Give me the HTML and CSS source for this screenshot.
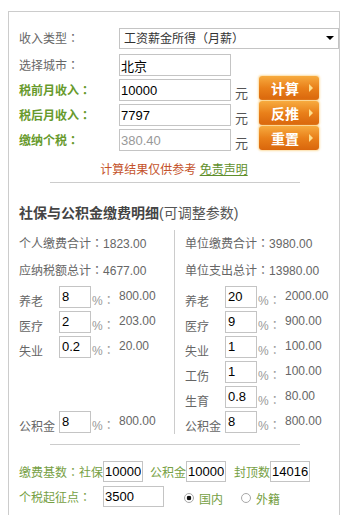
FILE: index.html
```html
<!DOCTYPE html>
<html lang="zh-CN">
<head>
<meta charset="utf-8">
<title>个税计算器</title>
<link rel="stylesheet" href="styles.css">
</head>
<body>
<div class="calc">
  <div class="row row-select">
    <span class="label">收入类型<span class="colon" lang="zh-TW">：</span></span>
    <div class="select-wrap">
      <select class="select"><option>工资薪金所得（月薪）</option></select>
      <span class="caret"></span>
    </div>
  </div>
  <div class="row">
    <span class="label">选择城市<span class="colon" lang="zh-TW">：</span></span>
    <input class="field" value="北京">
  </div>
  <div class="money">
    <div class="money-rows">
      <div class="row"><span class="label label-green">税前月收入<span class="colon" lang="zh-TW">：</span></span><input class="field" value="10000"><span class="unit">元</span></div>
      <div class="row"><span class="label label-green">税后月收入<span class="colon" lang="zh-TW">：</span></span><input class="field" value="7797"><span class="unit">元</span></div>
      <div class="row"><span class="label label-green">缴纳个税<span class="colon" lang="zh-TW">：</span></span><input class="field field-muted" value="380.40"><span class="unit">元</span></div>
    </div>
    <div class="buttons">
      <button class="btn">计算<span class="btn-arrow"></span></button>
      <button class="btn">反推<span class="btn-arrow"></span></button>
      <button class="btn">重置<span class="btn-arrow"></span></button>
    </div>
  </div>
  <p class="note">计算结果仅供参考 <a class="disclaimer">免责声明</a></p>
  <div class="sep"></div>
  <h2 class="detail-title">社保与公积金缴费明细<span class="title-sub">(可调整参数)</span></h2>
  <div class="detail">
    <div class="col col-left">
      <div class="sum">个人缴费合计<span class="colon" lang="zh-TW">：</span>1823.00</div>
      <div class="sum">应纳税额总计<span class="colon" lang="zh-TW">：</span>4677.00</div>
      <div class="item"><span class="item-label">养老</span><input class="rate" value="8"><span class="pct">%<span class="colon" lang="zh-TW">：</span></span><span class="amount">800.00</span></div>
      <div class="item"><span class="item-label">医疗</span><input class="rate" value="2"><span class="pct">%<span class="colon" lang="zh-TW">：</span></span><span class="amount">203.00</span></div>
      <div class="item"><span class="item-label">失业</span><input class="rate" value="0.2"><span class="pct">%<span class="colon" lang="zh-TW">：</span></span><span class="amount">20.00</span></div>
      <div class="item item-fund"><span class="item-label">公积金</span><input class="rate" value="8"><span class="pct">%<span class="colon" lang="zh-TW">：</span></span><span class="amount">800.00</span></div>
    </div>
    <div class="col col-right">
      <div class="sum">单位缴费合计<span class="colon" lang="zh-TW">：</span>3980.00</div>
      <div class="sum">单位支出总计<span class="colon" lang="zh-TW">：</span>13980.00</div>
      <div class="item"><span class="item-label">养老</span><input class="rate" value="20"><span class="pct">%<span class="colon" lang="zh-TW">：</span></span><span class="amount">2000.00</span></div>
      <div class="item"><span class="item-label">医疗</span><input class="rate" value="9"><span class="pct">%<span class="colon" lang="zh-TW">：</span></span><span class="amount">900.00</span></div>
      <div class="item"><span class="item-label">失业</span><input class="rate" value="1"><span class="pct">%<span class="colon" lang="zh-TW">：</span></span><span class="amount">100.00</span></div>
      <div class="item"><span class="item-label">工伤</span><input class="rate" value="1"><span class="pct">%<span class="colon" lang="zh-TW">：</span></span><span class="amount">100.00</span></div>
      <div class="item"><span class="item-label">生育</span><input class="rate" value="0.8"><span class="pct">%<span class="colon" lang="zh-TW">：</span></span><span class="amount">80.00</span></div>
      <div class="item"><span class="item-label">公积金</span><input class="rate" value="8"><span class="pct">%<span class="colon" lang="zh-TW">：</span></span><span class="amount">800.00</span></div>
    </div>
  </div>
  <div class="sep sep-2"></div>
  <div class="base">
    <div class="base-row">
      <span>缴费基数<span class="colon" lang="zh-TW">：</span>社保</span><input class="base-input" value="10000">
      <span class="base-gap">公积金</span><input class="base-input" value="10000">
      <span class="base-gap base-gap-wide">封顶数</span><input class="base-input" value="14016">
    </div>
    <div class="base-row">
      <span class="threshold-label">个税起征点<span class="colon" lang="zh-TW">：</span></span><input class="base-input threshold" value="3500">
      <label class="choice"><input type="radio" name="who" class="radio" checked><span>国内</span></label>
      <label class="choice choice-2"><input type="radio" name="who" class="radio"><span>外籍</span></label>
    </div>
  </div>
</div>
</body>
</html>
```

FILE: styles.css
```css
body {
  margin: 0;
  background: #fff;
  font-family: "Liberation Sans", "Noto Sans CJK SC", sans-serif;
  font-size: 12px;
  color: #666;
}

.colon {
  font-family: "Noto Sans CJK TC", "Noto Sans CJK SC", sans-serif;
  font-weight: normal;
}

.calc {
  width: 320px;
  margin: 11px 0 0 8px;
  border: 1px solid #ccc;
  padding: 16px 0 40px 10px;
}

.row {
  display: flex;
  align-items: center;
  height: 22px;
  margin-bottom: 3px;
}

.row-select {
  height: 21px;
  margin-bottom: 5px;
}

.label {
  width: 100px;
  flex: none;
  line-height: 22px;
  color: #666;
}

.label-green {
  color: #679a2c;
  font-weight: bold;
}

.label-green .colon {
  font-weight: bold;
}

.select-wrap {
  position: relative;
  width: 220px;
  height: 21px;
}

.select {
  appearance: none;
  -webkit-appearance: none;
  width: 220px;
  height: 21px;
  box-sizing: border-box;
  border: 1px solid #c4c4c4;
  border-radius: 0;
  background: #fff;
  padding: 0 0 0 4px;
  font: 12px "Liberation Sans", "Noto Sans CJK SC", sans-serif;
  color: #333;
}

.caret {
  position: absolute;
  right: 5px;
  top: 8px;
  border-top: 4px solid #000;
  border-left: 4px solid transparent;
  border-right: 4px solid transparent;
}

.field {
  width: 112px;
  height: 22px;
  box-sizing: border-box;
  border: 1px solid #c4c4c4;
  padding: 0 1px;
  margin: 0;
  font: 13px "Liberation Sans", "Noto Sans CJK SC", sans-serif;
  color: #000;
}

.field-muted {
  color: #999;
}

.unit {
  margin-left: 4px;
  margin-top: 4px;
  font-size: 13px;
  color: #555;
}

.money {
  display: flex;
}

.money-rows {
  width: 240px;
}

.buttons {
  display: flex;
  flex-direction: column;
  gap: 1px;
  width: 60px;
  margin-top: -3px;
}

.btn {
  position: relative;
  width: 60px;
  height: 24px;
  border: 0;
  border-radius: 3px;
  background: linear-gradient(#f7ab3f, #e9801a 50%, #d9660c);
  box-shadow: 0 0 2px 1px rgba(250, 195, 90, 0.55);
  color: #fff;
  font: bold 14px "Noto Sans CJK SC", sans-serif;
  line-height: 24px;
  padding: 0 8px 0 0;
}

.btn-arrow {
  position: absolute;
  right: 6px;
  top: 8px;
  border-left: 4px solid #ffdf8c;
  border-top: 4px solid transparent;
  border-bottom: 4px solid transparent;
}

.note {
  margin: 6px 0 0 -10px;
  text-align: center;
  line-height: 20px;
  color: #c4522a;
}

.disclaimer {
  color: #5f8f2c;
  text-decoration: underline;
}

.sep {
  width: 250px;
  height: 0;
  border-top: 1px solid #ccc;
  margin: 2px 0 0 31px;
}

.detail-title {
  margin: 20px 0 0;
  line-height: 20px;
  font-size: 14px;
  font-weight: bold;
  color: #444;
}

.title-sub {
  font-weight: normal;
  color: #555;
}

.detail {
  display: flex;
  margin-top: 7px;
}

.col {
  display: flex;
  flex-direction: column;
}

.col-left {
  width: 155px;
}

.col-right {
  border-left: 1px solid #ccc;
  padding-left: 10px;
}

.sum {
  line-height: 25px;
  white-space: nowrap;
}

.item {
  display: flex;
  align-items: center;
  height: 25px;
}

.item-fund {
  margin-top: auto;
}

.item-label {
  width: 40px;
  flex: none;
  margin-top: 8px;
  white-space: nowrap;
}

.rate {
  width: 32px;
  height: 22px;
  box-sizing: border-box;
  border: 1px solid #c4c4c4;
  padding: 0 2px;
  margin: 0;
  font: 13px "Liberation Sans", "Noto Sans CJK SC", sans-serif;
  color: #000;
}

.pct {
  width: 27px;
  padding-left: 1px;
  margin-top: 6px;
  color: #999;
  white-space: nowrap;
}

.amount {
  margin-bottom: 2px;
  color: #666;
  white-space: nowrap;
}

.sep-2 {
  margin-top: 10px;
}

.base {
  margin-top: 14px;
}

.base-row {
  display: flex;
  align-items: center;
  height: 25px;
  color: #76a044;
  white-space: nowrap;
}

.base-input {
  width: 40px;
  height: 21px;
  box-sizing: border-box;
  border: 1px solid #c4c4c4;
  padding: 0 1px;
  margin: 0;
  font: 13px "Liberation Sans", "Noto Sans CJK SC", sans-serif;
  color: #000;
}

.base-gap {
  margin-left: 7px;
}

.base-gap-wide {
  margin-left: 8px;
}

.threshold-label {
  width: 84px;
}

.threshold {
  width: 61px;
}

.choice {
  display: flex;
  align-items: center;
  margin-left: 20px;
  margin-top: 3px;
}

.choice-2 {
  margin-left: 18px;
}

.radio {
  appearance: none;
  -webkit-appearance: none;
  width: 10px;
  height: 10px;
  margin: 0 5px 0 0;
  box-sizing: border-box;
  border: 1px solid #a8a8a8;
  border-radius: 50%;
  background: #fff;
}

.radio:checked {
  background: radial-gradient(circle, #111 0 2px, #fff 2.6px);
}
```
